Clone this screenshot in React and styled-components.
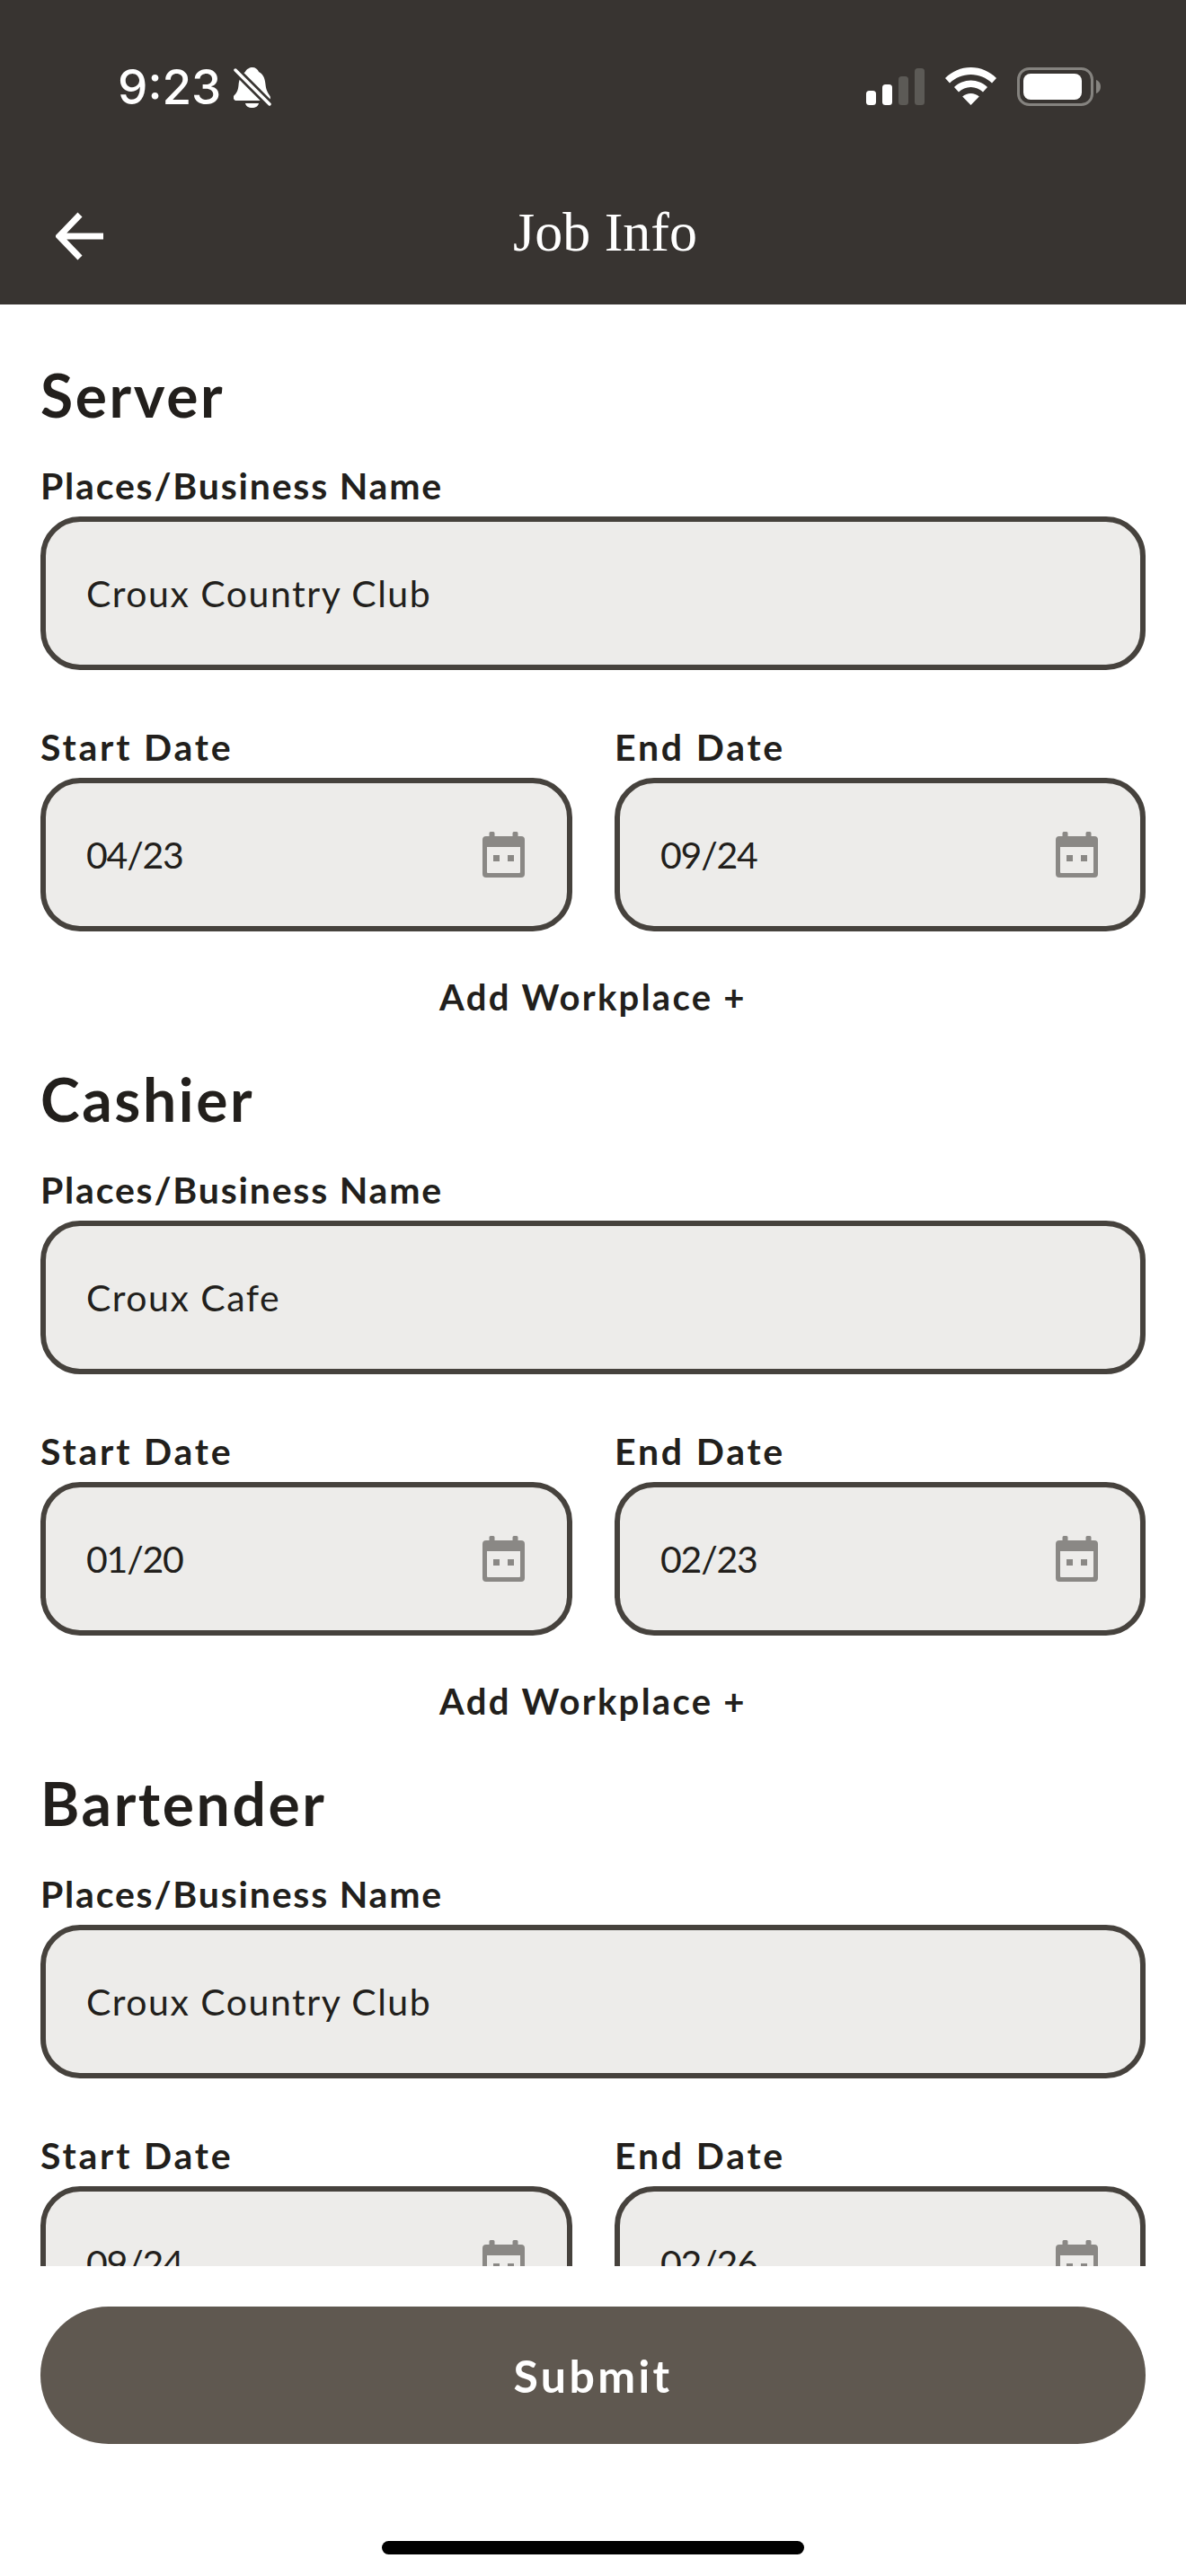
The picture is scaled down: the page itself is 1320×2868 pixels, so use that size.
import React from 'react';
import styled, { createGlobalStyle } from 'styled-components';

const jobs = [
  { title: 'Server', place: 'Croux Country Club', start: '04/23', end: '09/24', canAdd: true },
  { title: 'Cashier', place: 'Croux Cafe', start: '01/20', end: '02/23', canAdd: true },
  // last one runs under the footer, its add link is never on screen
  { title: 'Bartender', place: 'Croux Country Club', start: '09/24', end: '02/26', canAdd: false },
];

const CalendarIcon = () => (
  <CalendarSvg viewBox="0 0 47 51">
    <path
      fill="#8a8885"
      fillRule="evenodd"
      d="M9 0h3a1.5 1.5 0 0 1 1.5 1.5V5h20V1.5A1.5 1.5 0 0 1 35 0h3a1.5 1.5 0 0 1 1.500 1.500V5H43a4 4 0 0 1 4 4v38a4 4 0 0 1-4 4H4a4 4 0 0 1-4-4V9a4 4 0 0 1 4-4h3.500V1.500A1.500 1.500 0 0 1 9 0zM5 17v28a1 1 0 0 0 1 1h35a1 1 0 0 0 1-1V17z"
    />
    <rect x="12" y="26" width="7" height="7" fill="#8a8885" />
    <rect x="28" y="26" width="7" height="7" fill="#8a8885" />
  </CalendarSvg>
);

const BellIcon = () => (
  <svg width="42" height="46" viewBox="0 0 42 46">
    <path
      fill="#fff"
      d="M21 0c3 0 6 2 7 5 6 3 7 9 7.500 14 .5 6 2.500 9 5 13 1 2 0 5-2 5H3c-2 0-4-2-3-5 3-3 5-6 5.500-12 .5-6 2.500-12 7.500-15 1-3 5-5 8-5z"
    />
    <path fill="#fff" d="M13 40h15c-.5 3-3.500 5-7.500 5s-7-2-7.500-5z" />
    <path stroke="#383431" strokeWidth="9" d="M-1 0l43 43" />
    <path stroke="#fff" strokeWidth="3.500" strokeLinecap="round" d="M2 3l38 38" />
  </svg>
);

const SignalIcon = () => (
  <svg width="65" height="41" viewBox="0 0 65 41">
    <rect x="0" y="25" width="11" height="16" rx="3.500" fill="#fff" />
    <rect x="18" y="18" width="11" height="23" rx="3.500" fill="#fff" />
    <rect x="36" y="9" width="11" height="32" rx="3.500" fill="#5c5a56" />
    <rect x="54" y="0" width="11" height="41" rx="3.500" fill="#5c5a56" />
  </svg>
);

const WifiIcon = () => (
  <svg width="57" height="42" viewBox="0 0 57 42">
    <path fill="#fff" d="M28.500 0C39.500 0 49.500 4.500 57 12l-5 5.500C45.500 11.500 37.500 8 28.500 8S11.500 11.500 5 17.500L0 12C7.500 4.500 17.500 0 28.500 0z" />
    <path fill="#fff" d="M28.500 14.500c7 0 13.500 2.800 18.500 7.500l-5 5.500c-3.500-3.300-8.300-5.500-13.500-5.500S18.500 24.200 15 27.500L10 22c5-4.700 11.500-7.500 18.500-7.500z" />
    <path fill="#fff" d="M28.500 29c3.500 0 6.800 1.300 9.300 3.500L28.500 42l-9.300-9.500c2.500-2.200 5.800-3.500 9.300-3.500z" />
  </svg>
);

const BatteryIcon = () => (
  <svg width="93" height="43" viewBox="0 0 93 43">
    <rect x="1.500" y="1.500" width="82" height="40" rx="12" fill="none" stroke="#85837f" strokeWidth="3" />
    <rect x="7" y="7" width="65" height="29" rx="8" fill="#fff" />
    <path fill="#85837f" d="M88 14c3 1 5 4 5 7.500S91 28 88 29z" />
  </svg>
);

const BackArrow = () => (
  <svg width="53" height="54" viewBox="0 0 53 54">
    <path d="M53 27H6M27 3L4 27l23 24" fill="none" stroke="#fff" strokeWidth="7" />
  </svg>
);

const JobSection = ({ job }) => (
  <Section>
    <JobTitle>{job.title}</JobTitle>
    <Label>Places/Business Name</Label>
    <Field>
      <FieldText>{job.place}</FieldText>
    </Field>
    <DateRow>
      <div>
        <Label $date>Start Date</Label>
        <Field>
          <FieldText $date>{job.start}</FieldText>
          <CalendarIcon />
        </Field>
      </div>
      <div>
        <Label $date>End Date</Label>
        <Field>
          <FieldText $date>{job.end}</FieldText>
          <CalendarIcon />
        </Field>
      </div>
    </DateRow>
    {job.canAdd && <AddWorkplace>Add Workplace +</AddWorkplace>}
  </Section>
);

const App = () => (
  <Screen>
    <GlobalStyle />
    <Header>
      <StatusBar>
        <StatusLeft>
          <Time>9:23</Time>
          <BellIcon />
        </StatusLeft>
        <StatusRight>
          <SignalIcon />
          <WifiIcon />
          <BatteryIcon />
        </StatusRight>
      </StatusBar>
      <TitleBar>
        <BackButton>
          <BackArrow />
        </BackButton>
        <PageTitle>Job Info</PageTitle>
      </TitleBar>
    </Header>
    <Content>
      {jobs.map(job => (
        <JobSection key={job.title} job={job} />
      ))}
    </Content>
    <Footer>
      <SubmitButton>Submit</SubmitButton>
      <HomeBar />
    </Footer>
  </Screen>
);

export default App;

const GlobalStyle = createGlobalStyle`
  html, body {
    margin: 0;
    background: #fff;
  }
`;

const Screen = styled.div`
  width: 1320px;
  height: 2868px;
  display: flex;
  flex-direction: column;
  overflow: hidden;
  background: #fff;
  color: #221f1c;
  font-family: Lato, 'Noto Sans', sans-serif;
`;

const Header = styled.header`
  height: 339px;
  flex: none;
  background: #383431;
  color: #fff;
`;

const StatusBar = styled.div`
  height: 45px;
  padding: 75px 95px 0 131px;
  display: flex;
  justify-content: space-between;
`;

const StatusLeft = styled.div`
  display: flex;
  align-items: center;
  gap: 14px;
  height: 45px;
`;

const Time = styled.span`
  font-family: Inter, sans-serif;
  font-size: 53px;
  font-weight: 500;
  line-height: 45px;
`;

const StatusRight = styled.div`
  display: flex;
  align-items: flex-start;
  gap: 23px;
  height: 45px;

  svg:first-child {
    margin-top: 1px;
  }
`;

const TitleBar = styled.div`
  height: 80px;
  margin-top: 103px;
  padding-left: 62px;
  display: flex;
  align-items: center;
  position: relative;
`;

const BackButton = styled.button`
  width: 53px;
  height: 54px;
  padding: 0;
  border: 0;
  background: none;
  display: block;
`;

const PageTitle = styled.h1`
  position: absolute;
  left: 0;
  right: 0;
  top: -5px;
  margin: 0;
  padding-left: 27px;
  font-family: 'Liberation Serif', serif;
  font-size: 62px;
  font-weight: 400;
  line-height: 80px;
  text-align: center;
`;

const Content = styled.main`
  flex: 1;
  min-height: 0;
  overflow: hidden;
  padding: 71px 45px 0;
`;

const Section = styled.section`
  margin-bottom: 64px;
`;

const JobTitle = styled.h2`
  margin: 0 0 51px;
  font-size: 66px;
  font-weight: 700;
  line-height: 60px;
  letter-spacing: 2.6px;
`;

const Label = styled.div`
  margin-bottom: 14px;
  font-size: 41px;
  font-weight: 700;
  line-height: 40px;
  letter-spacing: ${props => (props.$date ? '2.8px' : '1.8px')};
`;

const Field = styled.div`
  box-sizing: border-box;
  height: 171px;
  padding: 0 47px 0 45px;
  display: flex;
  align-items: center;
  justify-content: space-between;
  border: 6px solid #46423d;
  border-radius: 44px;
  background: #edecea;
`;

const FieldText = styled.span`
  font-size: 41px;
  font-weight: 400;
  letter-spacing: ${props => (props.$date ? '-1.2px' : '1.5px')};
`;

const CalendarSvg = styled.svg`
  width: 47px;
  height: 51px;
  flex: none;
`;

const DateRow = styled.div`
  margin-top: 66px;
  display: grid;
  grid-template-columns: 592px 591px;
  column-gap: 47px;
`;

const AddWorkplace = styled.div`
  margin-top: 53px;
  font-size: 40px;
  font-weight: 700;
  line-height: 40px;
  letter-spacing: 2.3px;
  text-align: center;
`;

const Footer = styled.footer`
  height: 345px;
  flex: none;
  box-sizing: border-box;
  padding: 45px 45px 0;
  display: flex;
  flex-direction: column;
  align-items: center;
`;

const SubmitButton = styled.button`
  width: 100%;
  height: 153px;
  flex: none;
  border: 0;
  border-radius: 76px;
  background: #5f5850;
  color: #fff;
  font-family: Lato, 'Noto Sans', sans-serif;
  font-size: 50px;
  font-weight: 700;
  letter-spacing: 3.4px;
`;

const HomeBar = styled.div`
  width: 470px;
  height: 15px;
  margin-top: 108px;
  flex: none;
  border-radius: 8px;
  background: #000;
`;
